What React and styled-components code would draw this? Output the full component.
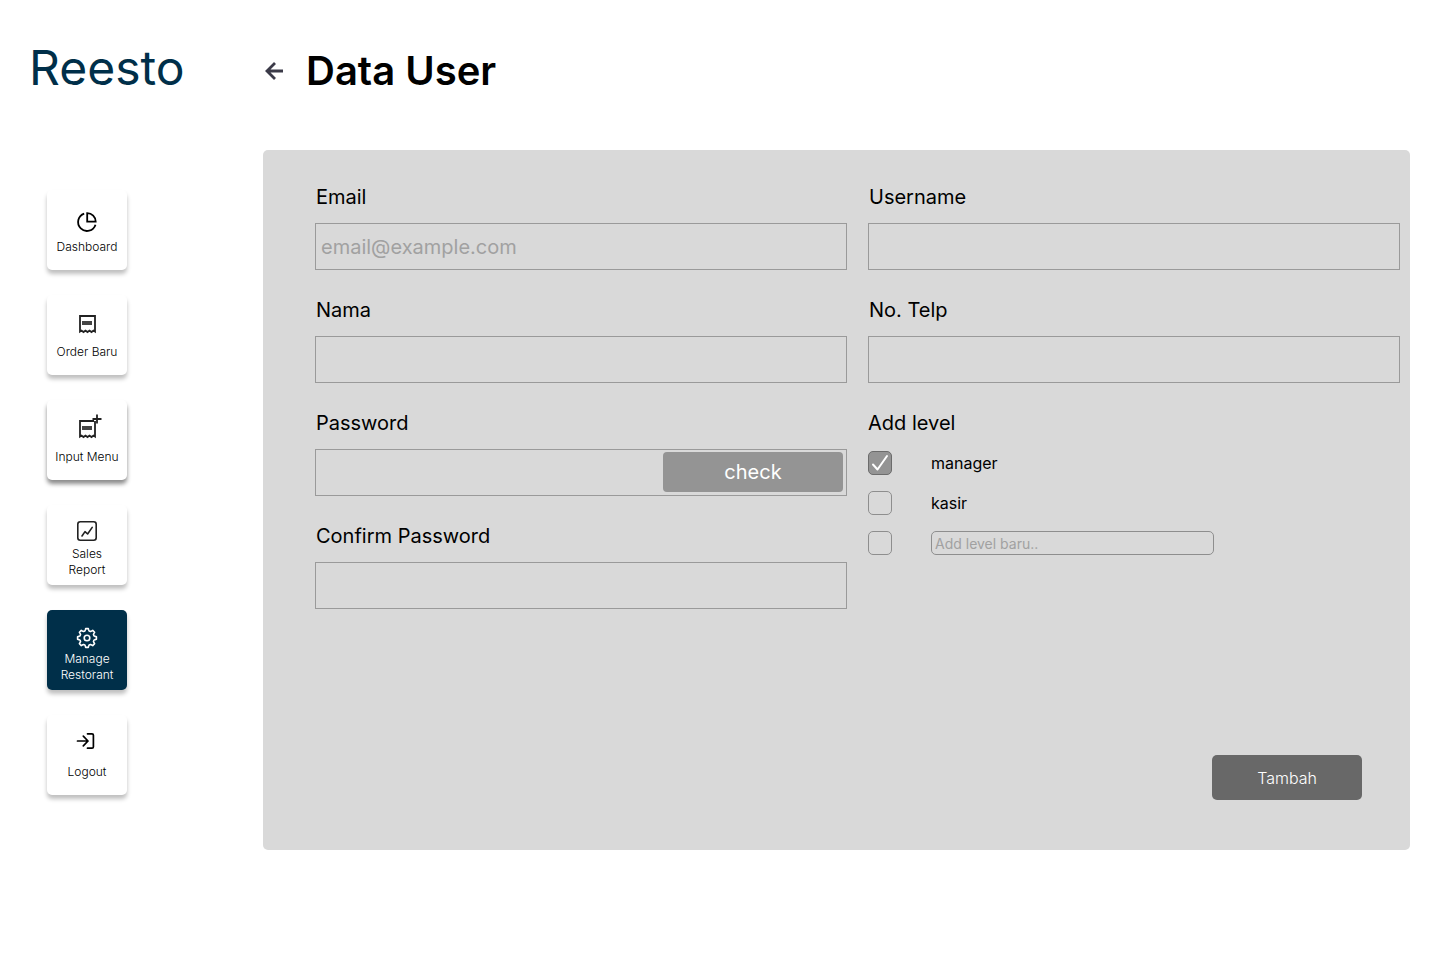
import React from "react";
import styled, { createGlobalStyle, css } from "styled-components";

const GlobalStyle = createGlobalStyle`
  *, *::before, *::after { box-sizing: border-box; }
  body { margin: 0; background: #fff; color: #000; font-family: Inter, "Liberation Sans", sans-serif; }
  button, input { font-family: inherit; }
`;

const Page = styled.div`
  display: grid;
  grid-template-columns: 263px minmax(0, 1fr);
  padding: 0 30px 48px 0;
`;

const Sidebar = styled.aside`
  display: flex;
  flex-direction: column;
`;

const Logo = styled.a`
  height: 190px;
  padding: 38px 0 0 29px;
  color: #002f49;
  font-size: 48px;
  font-weight: 400;
  line-height: 60px;
  text-decoration: none;
`;

const Nav = styled.nav`
  display: flex;
  flex-direction: column;
  gap: 25px;
  padding-left: 47px;
`;

const NavCard = styled.a`
  display: flex;
  flex-direction: column;
  align-items: center;
  width: 80px;
  height: 80px;
  padding-top: 5px;
  border-radius: 5px;
  background: ${(p) => (p.$active ? "#002f49" : "#fff")};
  color: ${(p) => (p.$active ? "#fff" : "#000")};
  box-shadow: 0 4px 4px rgba(0, 0, 0, ${(p) => (p.$raised ? 0.45 : 0.25)});
  text-decoration: none;
`;

const NavIcon = styled.svg`
  display: block;
  flex: none;
  overflow: visible;
  fill: none;
  stroke: currentColor;
  stroke-width: 1.6;
`;

const NavLabel = styled.span`
  display: flex;
  align-items: center;
  height: 32px;
  font-size: 12px;
  font-weight: 300;
  line-height: 16px;
  text-align: center;
  white-space: pre-line;
`;

const Header = styled.header`
  display: flex;
  align-items: center;
  gap: 19px;
  height: 150px;
  padding-bottom: 8px;
`;

const BackButton = styled.button`
  display: flex;
  padding: 0;
  border: 0;
  background: none;
  color: #3b3a48;
  cursor: pointer;
`;

const Title = styled.h1`
  margin: 0;
  font-size: 40px;
  font-weight: 600;
  line-height: 50px;
`;

const Panel = styled.form`
  display: flex;
  flex-direction: column;
  min-height: 700px;
  padding: 34px 10px 50px 52px;
  border-radius: 5px;
  background: #d9d9d9;
`;

const Columns = styled.div`
  display: grid;
  grid-template-columns: repeat(2, minmax(0, 1fr));
  gap: 21px;
`;

const Column = styled.div`
  display: flex;
  flex-direction: column;
  gap: 27px;
`;

const Field = styled.div`
  display: flex;
  flex-direction: column;
  gap: 13px;
`;

const captionText = css`
  padding: 0 1px;
  font-size: 20px;
  font-weight: 400;
  line-height: 26px;
`;

const Caption = styled.label`
  ${captionText}
`;

const InputFrame = styled.div`
  display: flex;
  align-items: flex-start;
  height: 47px;
  padding: 2px 3px 2px 0;
  border: 1px solid #9a9a9a;
`;

const TextInput = styled.input`
  flex: 1;
  min-width: 0;
  height: 100%;
  padding: 0 5px;
  border: 0;
  outline: 0;
  background: none;
  font-size: 20px;
  &::placeholder { color: #a1a1a1; opacity: 1; }
`;

const CheckButton = styled.button`
  width: 180px;
  height: 40px;
  border: 0;
  border-radius: 4px;
  background: #949494;
  color: #fff;
  font-size: 20px;
  cursor: pointer;
`;

const LevelGroup = styled.fieldset`
  display: flex;
  flex-direction: column;
  gap: 16px;
  min-width: 0;
  margin: 0;
  padding: 0;
  border: 0;
`;

const LevelLegend = styled.legend`
  ${captionText}
  padding: 0;
  margin-bottom: 15px;
`;

const LevelRow = styled.div`
  display: flex;
  align-items: center;
  gap: 39px;
  height: 24px;
  font-size: 16px;
`;

const TickFrame = styled.span`
  display: grid;
  width: 24px;
  height: 24px;
  & > * { grid-area: 1 / 1; }
`;

const TickInput = styled.input`
  appearance: none;
  width: 24px;
  height: 24px;
  margin: 0;
  border: 1px solid #8e8e8e;
  border-radius: 5px;
  &:checked { background: #949494; border-color: #6c6c6c; }
  & + svg { visibility: hidden; pointer-events: none; }
  &:checked + svg { visibility: visible; }
`;

const NewLevelInput = styled.input`
  width: 283px;
  height: 24px;
  padding: 0 3px;
  border: 1px solid #8e8e8e;
  border-radius: 5px;
  outline: 0;
  background: none;
  font-size: 14px;
  &::placeholder { color: #a1a1a1; opacity: 1; }
`;

const SubmitButton = styled.button`
  align-self: flex-end;
  width: 150px;
  height: 45px;
  margin: auto 38px 0 0;
  border: 0;
  border-radius: 5px;
  background: #686868;
  color: #fff;
  font-size: 16px;
  font-weight: 300;
  cursor: pointer;
`;

const gearPath = (() => {
  const tooth = [[-17, 7.3], [-11, 8.4], [-8, 9.5], [8, 9.5], [11, 8.4], [17, 7.3]];
  const points = [];
  for (let i = 0; i < 8; i += 1) {
    tooth.forEach(([offset, radius]) => {
      const angle = ((i * 45 + offset - 90) * Math.PI) / 180;
      points.push(`${(18 + radius * Math.cos(angle)).toFixed(2)} ${(23 + radius * Math.sin(angle)).toFixed(2)}`);
    });
  }
  return `M${points.join("L")}Z`;
})();

const Bar = () => <rect x="13" y="21" width="10" height="4" fill="#444" stroke="none" />;

const drawings = {
  dashboard: (
    <>
      <path d="M15.2 18.6A8.9 8.9 0 1 0 26.5 29.7" strokeWidth="1.8" />
      <path d="M18.2 18.2V26.7H26.7A8.5 8.5 0 0 0 18.2 18.2Z" strokeWidth="1.8" />
    </>
  ),
  order: (
    <>
      <path d="M11 31.5V16H26V31.5L24.5 30.5L22.5 32L20.5 30.5L18.5 32L16.5 30.5L14.5 32L12.5 30.5Z" strokeWidth="1.8" stroke="#222" />
      <Bar />
    </>
  ),
  menu: (
    <>
      <path d="M25 16H11V31.5L12.5 30.5L14.5 32L16.5 30.5L18.5 32L20.5 30.5L22.5 32L24.5 30.5L26 31.5V16" strokeWidth="1.8" stroke="#222" />
      <path d="M28 9.5V18.5M23.5 14H32.5" strokeWidth="1.8" stroke="#222" />
      <Bar />
    </>
  ),
  sales: (
    <>
      <rect x="8.8" y="11.8" width="18.4" height="18.4" rx="2.5" stroke="#222" />
      <path d="M13 26L16 21.6L18.6 24L23.2 17.4" strokeLinecap="round" strokeLinejoin="round" stroke="#222" />
    </>
  ),
  manage: (
    <>
      <path d={gearPath} strokeWidth="1.6" strokeLinejoin="round" />
      <circle cx="18" cy="23" r="2.8" strokeWidth="1.6" />
    </>
  ),
  logout: (
    <path d="M8.5 21H19M14.3 16.2L19 21L14.3 25.8M18.5 13.8H23Q24.4 13.8 24.4 15.2V26.8Q24.4 28.2 23 28.2H18.5" strokeLinecap="round" strokeLinejoin="round" strokeWidth="1.7" />
  ),
};

const navItems = [
  { id: "dashboard", label: "Dashboard" },
  { id: "order", label: "Order Baru" },
  { id: "menu", label: "Input Menu", raised: true },
  { id: "sales", label: "Sales\nReport" },
  { id: "manage", label: "Manage\nRestorant", active: true },
  { id: "logout", label: "Logout" },
];

function FormField({ id, label, type = "text", placeholder, children }) {
  return (
    <Field>
      <Caption htmlFor={id}>{label}</Caption>
      <InputFrame>
        <TextInput id={id} type={type} placeholder={placeholder} />
        {children}
      </InputFrame>
    </Field>
  );
}

function Tick(props) {
  return (
    <TickFrame>
      <TickInput type="checkbox" {...props} />
      <svg width="24" height="24" viewBox="0 0 24 24" fill="none" stroke="#fff" strokeWidth="2" strokeLinecap="round" strokeLinejoin="round" aria-hidden="true">
        <path d="M5 13.5L9.5 18.5L19 5" />
      </svg>
    </TickFrame>
  );
}

export default function App() {
  return (
    <>
      <GlobalStyle />
      <Page>
        <Sidebar>
          <Logo href="#home">Reesto</Logo>
          <Nav>
            {navItems.map(({ id, label, active, raised }) => (
              <NavCard key={id} href={`#${id}`} $active={active} $raised={raised} aria-current={active ? "page" : undefined}>
                <NavIcon width="36" height="36" viewBox="0 0 36 36" aria-hidden="true">{drawings[id]}</NavIcon>
                <NavLabel>{label}</NavLabel>
              </NavCard>
            ))}
          </Nav>
        </Sidebar>
        <main>
          <Header>
            <BackButton type="button" aria-label="Back">
              <svg width="24" height="24" viewBox="0 0 24 24" fill="none" stroke="currentColor" strokeWidth="2.8" aria-hidden="true">
                <path d="M20 12H4M12 4L4 12L12 20" />
              </svg>
            </BackButton>
            <Title>Data User</Title>
          </Header>
          <Panel onSubmit={(e) => e.preventDefault()}>
            <Columns>
              <Column>
                <FormField id="email" label="Email" type="email" placeholder="email@example.com" />
                <FormField id="nama" label="Nama" />
                <FormField id="password" label="Password" type="password">
                  <CheckButton type="button">check</CheckButton>
                </FormField>
                <FormField id="confirm" label="Confirm Password" type="password" />
              </Column>
              <Column>
                <FormField id="username" label="Username" />
                <FormField id="telp" label="No. Telp" type="tel" />
                <LevelGroup>
                  <LevelLegend>Add level</LevelLegend>
                  <LevelRow>
                    <Tick id="manager" defaultChecked />
                    <label htmlFor="manager">manager</label>
                  </LevelRow>
                  <LevelRow>
                    <Tick id="kasir" />
                    <label htmlFor="kasir">kasir</label>
                  </LevelRow>
                  <LevelRow>
                    <Tick aria-label="Level baru" />
                    <NewLevelInput type="text" aria-label="Add level baru" placeholder="Add level baru.." />
                  </LevelRow>
                </LevelGroup>
              </Column>
            </Columns>
            <SubmitButton type="submit">Tambah</SubmitButton>
          </Panel>
        </main>
      </Page>
    </>
  );
}
